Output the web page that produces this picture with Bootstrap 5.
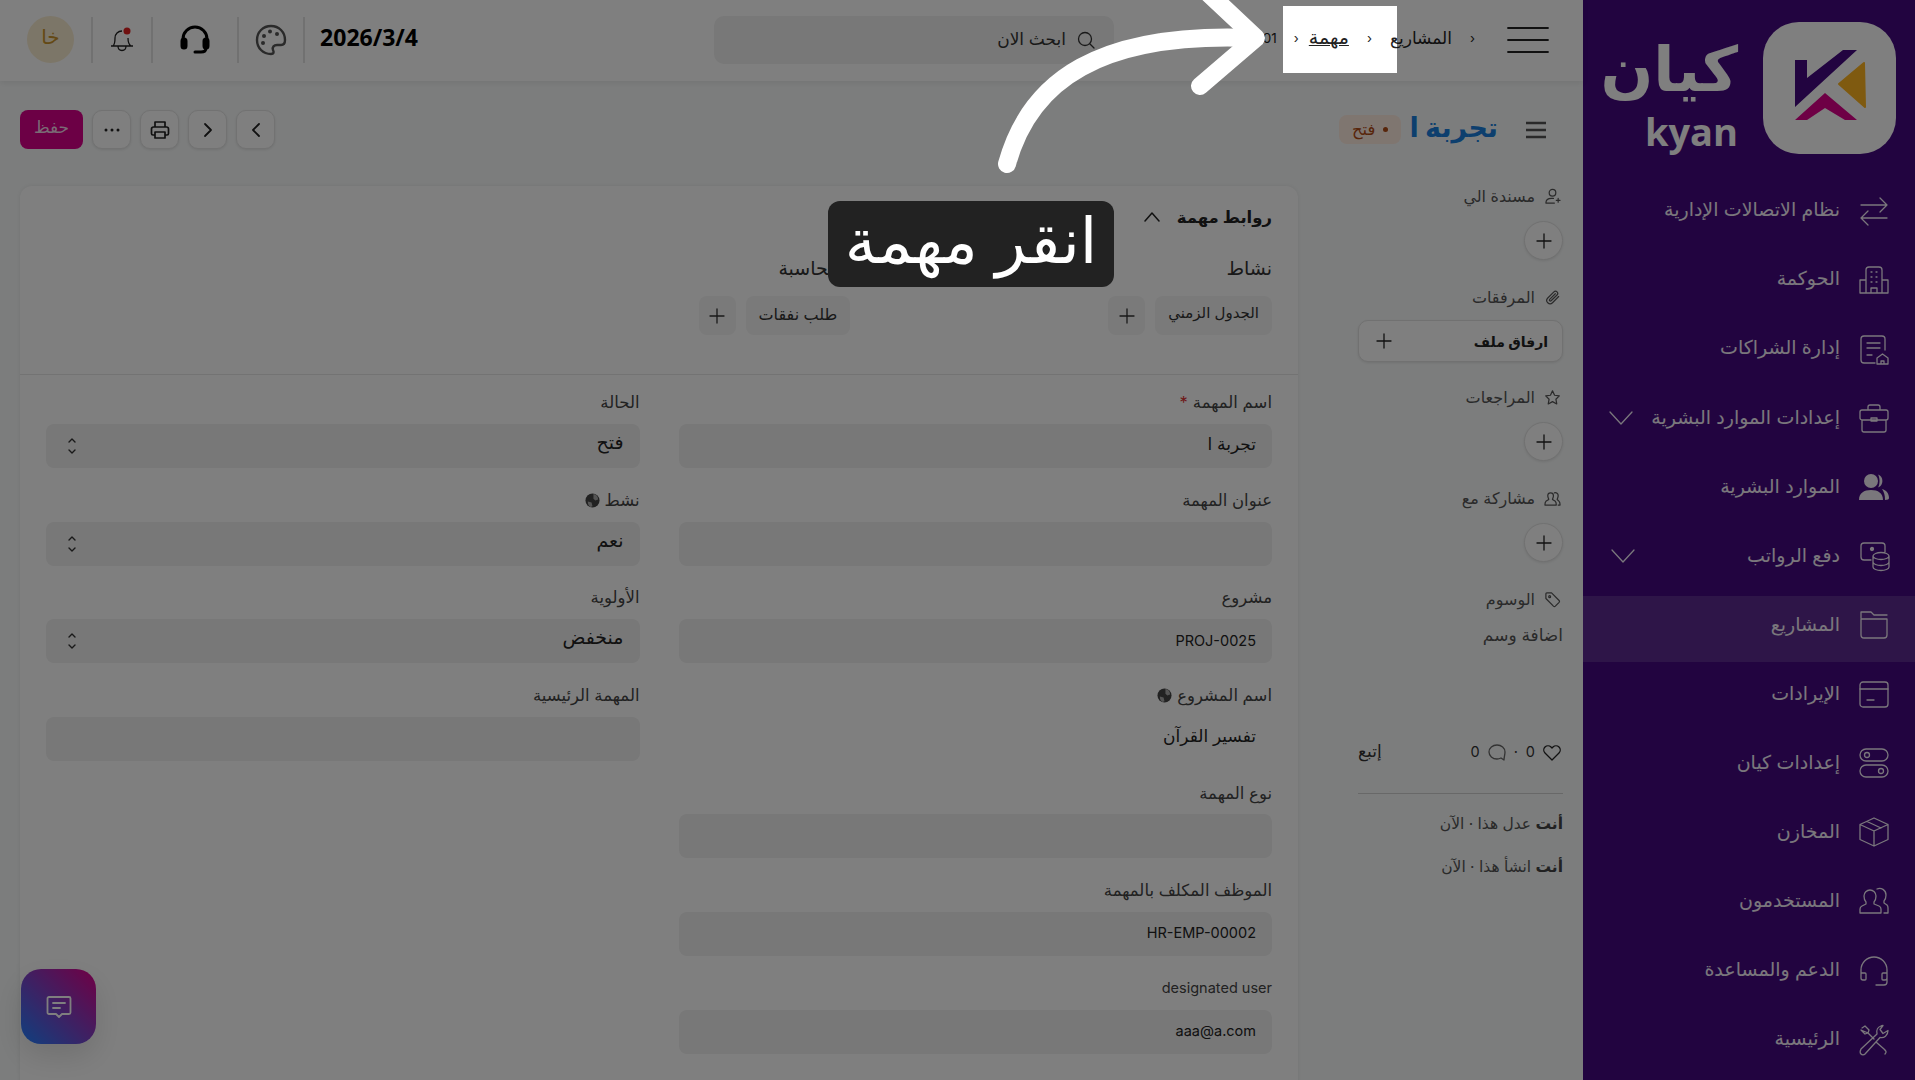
<!DOCTYPE html>
<html lang="ar" dir="rtl">
<head>
<meta charset="utf-8">
<title>مهمة</title>
<link href="https://cdn.jsdelivr.net/npm/bootstrap@5.3.0/dist/css/bootstrap.min.css" rel="stylesheet">
<style>
html,body{height:100%;overflow:hidden}
body{font-family:"Inter","DejaVu Sans",sans-serif;background:#f9fbfb;color:#222;font-size:13px}
svg{display:block;flex:none}
.ico{fill:none;stroke:currentColor;stroke-width:1.3;stroke-linecap:round;stroke-linejoin:round}
.shell{height:1080px}
.side{width:332px;flex:none;background:#440880;color:#fff;height:1080px}
.brand{height:176px;padding:22px 19px 0 0;gap:25px}
.tile{width:133px;height:132px;background:#fff;border-radius:36px}
.brand-ar{font-size:62px;font-weight:700;line-height:78px;height:78px;margin-top:8px;color:#fff;text-align:right}
.brand-en{font-family:"Open Sans",sans-serif;font-weight:700;font-size:38px;line-height:34px;direction:ltr;text-align:right;margin-top:6px}
.sitem{height:69.1px;padding:0 25px 0 28px;gap:18px;font-size:19px;color:#f4eef8;white-space:nowrap}
.sitem.on{background:#5c2a90;box-shadow:inset 0 5px 0 #440880,0 2px 0 #5c2a90}
.sitem .ico{width:32px;height:32px}
.sitem .chev{margin-right:auto;width:24px;height:14px}
.main{width:1583px;flex:none}
.top{height:81px;background:#fff;box-shadow:0 2px 6px rgba(0,0,0,.08);padding:0 34px 2px 27px;position:relative}
.burger{width:42px;height:26px}
.crumbs{width:393px;gap:18px;padding-right:32px;padding-bottom:2px;white-space:nowrap;font-size:17px;color:#222}
.crumbs a{color:#222;font-size:19px}
.crumbs .sep{font-size:13px}
.crumbs .seplast{margin-right:-8px}
.crumbs .ltr-val{font-size:13.5px;margin-right:-1px}
.searchbox{width:400px;height:48px;background:#f0f0f0;border-radius:10px;padding:0 19px;gap:11px;color:#333;font-size:17px}
.dategrp{height:46px;margin-right:auto}
.date{font-family:"Open Sans",sans-serif;font-weight:700;font-size:23px;color:#000;direction:ltr;width:115px;padding-right:2px;text-align:right;line-height:38px;padding-bottom:6px}
.cell{height:46px;border-right:2px solid #e2e2e2}
.cell1{width:66px}.cell2{width:86px}.cell3{width:60px}
.avatar{width:47px;height:47px;border-radius:50%;background:#f9ecd0;color:#c8922a;margin-right:17px;font-size:20px;padding-bottom:5px}
.bar{padding:29px 37px 0 20px;height:68px;margin-bottom:37px}
.ttlgrp{gap:12px}
.ttl{font-size:27px;font-weight:700;color:#1a7fdc;line-height:38px;margin-right:16px;padding-bottom:4px}
.pill{background:#ffece0;color:#b04a14;border-radius:8px;height:29px;padding:0 13px;font-size:16.5px;gap:8px;margin-right:-4px}
.dot{width:5px;height:5px;border-radius:50%;background:#b04a14}
.tbtn{width:39px;height:39px;background:#fff;border:1px solid #e4e4e4;border-radius:10px;box-shadow:0 1px 3px rgba(0,0,0,.1);color:#222;padding:0}
.savebtn{width:63px;height:39px;background:#d8008a;color:#f4d8ea;border:0;border-radius:8px;font-size:17px;padding:0 0 4px}
.btns{gap:9px;margin-right:auto}
.body-wrap{padding:0 20px;gap:60px}
.fside{width:205px;flex:none;color:#444}
.flabel{height:20px;gap:9px;font-size:16px;color:#555;padding-right:2px}
.flabel .ico{width:17px;height:17px}
.roundbtn{width:39px;height:39px;border-radius:50%;background:#fff;border:1px solid #e2e2e2;box-shadow:0 1px 3px rgba(0,0,0,.1);padding:0;color:#222}
.roundwrap{margin:15px 0 27px}
.attach{height:42px;width:100%;background:#fff;border:1px solid #e2e2e2;border-radius:10px;box-shadow:0 1px 3px rgba(0,0,0,.1);padding:0 14px 0 16px;margin:13px 0 25px;font-size:14px;color:#222;font-weight:700}
.tagadd{margin-top:16px;height:20px;font-size:17px;color:#555;line-height:20px}
.likes{margin-top:97px;height:20px;font-size:14.5px;color:#333;padding-right:2px}
.likes .fol{font-size:17px}
.sideline{margin:31px 0 0;border-top:1px solid #d0d0d0;opacity:1}
.act{font-size:15.5px;color:#555;height:20px;line-height:20px}
.act b{color:#444}
.act1{margin-top:20px}.act2{margin-top:23px}
.fcard{width:1278px;flex:none;background:#fff;border:0;border-radius:12px 12px 0 0;box-shadow:0 0 5px rgba(0,0,0,.08);height:900px;padding:0}
.fhead{padding:20px 26px 39px;border-bottom:1px solid #e6e6e6}
.fbody{padding:19px 26px 0}
.sect{height:22px;gap:16px;font-size:16.5px;font-weight:700;color:#222}
.tabs{--bs-gutter-x:39px;margin-top:31px}
.tabname{font-size:19px;color:#333;height:20px;line-height:20px}
.chiprow{gap:10px;margin-top:17px}
.chip{height:39px;background:#f4f4f4;border:0;border-radius:8px;padding:0 13px 4px;font-size:15px;color:#333;margin:0}
.chip.wide{font-size:16px}
.chipadd{width:37px;height:39px;background:#f4f4f4;border:0;border-radius:8px;padding:0;color:#333;margin:0}
.frow{--bs-gutter-x:39px}
.fld{margin-bottom:23.6px}
.fld label{display:flex;gap:5px;height:20px;align-items:center;font-size:16.5px;color:#444;margin-bottom:10px;padding-bottom:3px}
.fld label.ltr-val{font-size:14.5px}
.fld .form-control,.fld .form-select{height:44px;background:#f0f0f0;background-image:none;border:0;border-radius:8px;font-size:17px;color:#222;padding:0 16px 5px;box-shadow:none}
.fld .form-select{font-size:19px}
.fld .form-control.ltr-val{font-size:14.5px;padding-bottom:2px}
.fld .req{color:#d33}
.fld .form-control.plain{background:#fff}
.ltr-val{font-family:"Inter",sans-serif}
.updown{position:absolute;left:21px;top:50%;transform:translateY(-50%);color:#333}
.fab{position:absolute;left:21px;top:969px;width:75px;height:75px;border-radius:20px;background:linear-gradient(45deg,#1f80ff,#e0008a);box-shadow:0 12px 30px rgba(0,0,0,.12);color:#fff}
.hole{position:fixed;left:1283px;top:6px;width:114px;height:67px;box-shadow:0 0 0 3000px rgba(0,0,0,.5);z-index:1050;pointer-events:none}
.arrow{position:fixed;left:0;top:0;z-index:1060;pointer-events:none}
.tip{position:fixed;left:828px;top:201px;width:286px;height:86px;background:#222;color:#fff;border-radius:12px;font-size:63px;line-height:78px;text-align:center;z-index:1060;white-space:nowrap;overflow:hidden}
</style>
</head>
<body>
<div class="shell d-flex">
  <aside class="side">
    <div class="brand d-flex align-items-start">
      <div class="tile d-flex align-items-center justify-content-center">
        <svg width="133" height="132" viewBox="0 0 133 128">
          <polygon points="32,36 44,36 44,54 80,26 94,26 32,83" fill="#440880"/>
          <polygon points="101,39 102,83 76,60" fill="#ffb420" stroke="#ffb420" stroke-width="2" stroke-linejoin="round"/>
          <polygon points="32,96 62,69 94,96 82,96 62,84 44,96" fill="#dc008a"/>
        </svg>
      </div>
      <div>
        <div class="brand-ar">كيان</div>
        <div class="brand-en">kyan</div>
      </div>
    </div>
    <nav class="d-flex flex-column">
      <div class="sitem d-flex align-items-center"><svg class="ico" viewBox="0 0 32 32"><path d="M3 10h26M22 3l7 7-7 7M29 23H3M10 16l-7 7 7 7"/></svg><span>نظام الاتصالات الإدارية</span></div>
      <div class="sitem d-flex align-items-center"><svg class="ico" viewBox="0 0 32 32"><path d="M8 29V6a3 3 0 0 1 3-3h10a3 3 0 0 1 3 3v23M8 16H2v13h28V16h-6M13 29v-5h6v5M13 8h1M18 8h1M13 13h1M18 13h1M13 18h1M18 18h1"/></svg><span>الحوكمة</span></div>
      <div class="sitem d-flex align-items-center"><svg class="ico" viewBox="0 0 32 32"><path d="M27 17V6a3 3 0 0 0-3-3H6a3 3 0 0 0-3 3v21a3 3 0 0 0 3 3h11M9 10h13M9 15h13M9 22h5M19 31v-6l5.500-4 5.500 4v6zM23 31v-3h3v3"/></svg><span>إدارة الشراكات</span></div>
      <div class="sitem d-flex align-items-center"><svg class="ico" viewBox="0 0 32 32"><path d="M2 10a2 2 0 0 1 2-2h24a2 2 0 0 1 2 2v6a2 2 0 0 1-2 2H4a2 2 0 0 1-2-2zM4 18v10a2 2 0 0 0 2 2h20a2 2 0 0 0 2-2V18M10 8V5a2 2 0 0 1 2-2h8a2 2 0 0 1 2 2v3M13 16h6v3h-6z"/></svg><span>إعدادات الموارد البشرية</span><svg class="ico chev" viewBox="0 0 24 14"><path d="M1 1l11 12L23 1"/></svg></div>
      <div class="sitem d-flex align-items-center"><svg class="ico" viewBox="0 0 32 32" style="fill:currentColor;stroke:none"><circle cx="13" cy="10" r="7"/><path d="M1 29c0-7 5-10 12-10s12 3 12 10zM20 3.500a7 7 0 0 1 0 13c2-3 2-10 0-13zM24 18c4 1 7 4 7 9 0 1-1 2-4 2 0-5-1-8-3-11z"/></svg><span>الموارد البشرية</span></div>
      <div class="sitem d-flex align-items-center"><svg class="ico" viewBox="0 0 32 32"><path d="M27 12V6a3 3 0 0 0-3-3H6a3 3 0 0 0-3 3v11a3 3 0 0 0 3 3h7M15 16c0-2 4-3.500 8-3.500s8 1.500 8 3.500-4 3.500-8 3.500-8-1.500-8-3.500zM15 16v11c0 2 4 3.500 8 3.500s8-1.500 8-3.500V16M15 22c0 2 4 3.500 8 3.500s8-1.500 8-3.500"/><circle cx="14" cy="9" r="1.500" fill="currentColor"/></svg><span>دفع الرواتب</span><svg class="ico chev" viewBox="0 0 24 14"><path d="M1 1l11 12L23 1"/></svg></div>
      <div class="sitem on d-flex align-items-center"><svg class="ico" viewBox="0 0 32 32"><path d="M3 9V3h10l3 3h13M3 10h26v16a3 3 0 0 1-3 3H6a3 3 0 0 1-3-3z"/></svg><span>المشاريع</span></div>
      <div class="sitem d-flex align-items-center"><svg class="ico" viewBox="0 0 32 32"><rect x="2" y="4" width="28" height="25" rx="3"/><path d="M2 11h28M9 22h7"/></svg><span>الإيرادات</span></div>
      <div class="sitem d-flex align-items-center"><svg class="ico" viewBox="0 0 32 32"><rect x="2" y="2" width="28" height="12" rx="6"/><circle cx="9" cy="8" r="2.500"/><rect x="2" y="18" width="28" height="12" rx="6"/><circle cx="23" cy="24" r="2.500"/></svg><span>إعدادات كيان</span></div>
      <div class="sitem d-flex align-items-center"><svg class="ico" viewBox="0 0 32 32"><path d="M16 2l14 6.500v15L16 30 2 23.500v-15zM2 8.500L16 15l14-6.500M16 15v15M9 5.500l14 6.500"/></svg><span>المخازن</span></div>
      <div class="sitem d-flex align-items-center"><svg class="ico" viewBox="0 0 32 32"><path d="M12 5a6 6 0 0 1 6 6c0 3-1 5-2 6v2l5 2c2 1 2 2 2 3v4H2v-4c0-1 0-2 2-3l4-2v-2c-1-1-2-3-2-6a6 6 0 0 1 6-6zM19 4c4-2 9 1 9 6 0 3-1 5-2 6v2l3 2c1 1 1 2 1 3v5h-4"/></svg><span>المستخدمون</span></div>
      <div class="sitem d-flex align-items-center"><svg class="ico" viewBox="0 0 32 32"><path d="M3 23V15a13 13 0 0 1 26 0v8M3 18h4a1 1 0 0 1 1 1v5a1 1 0 0 1-1 1H5a2 2 0 0 1-2-2M29 18h-4a1 1 0 0 0-1 1v5a1 1 0 0 0 1 1h2a2 2 0 0 0 2-2M29 23v4a3 3 0 0 1-3 3h-8"/></svg><span>الدعم والمساعدة</span></div>
      <div class="sitem d-flex align-items-center"><svg class="ico" viewBox="0 0 32 32"><path d="M3 25L19 10c-1-4 1-7 4-8l2-.5-3 4 3 4 5-3c0 5-4 8-8 7L7 30c-1 1-3 1-4 0s-1-3 0-5zM4 4l3-2 4 4-1 3 6 6M18 18l8 7c2 2 3 3 1 5M10 9L7 10 3 6z"/></svg><span>الرئيسية</span></div>
    </nav>
  </aside>

  <div class="main">
    <header class="top d-flex align-items-center">
      <svg class="burger ico" viewBox="0 0 42 26"><path d="M1 1h40M1 13h40M1 25h40" stroke-width="1.800"/></svg>
      <div class="crumbs d-flex align-items-center">
        <span class="sep">‹</span>
        <span>المشاريع</span>
        <span class="sep">‹</span>
        <a href="#">مهمة</a>
        <span class="sep seplast">‹</span>
        <span class="ltr-val" dir="ltr">TASK-2026-00001</span>
      </div>
      <div class="searchbox d-flex align-items-center">
        <svg class="ico" width="18" height="18" viewBox="0 0 18 18"><circle cx="8" cy="8" r="6.500"/><path d="M13 13l4 4"/></svg>
        <span>ابحث الان</span>
      </div>
      <div class="dategrp d-flex align-items-center">
        <div class="date">2026/3/4</div>
        <div class="cell cell1 d-flex align-items-center justify-content-center">
          <svg width="32" height="32" viewBox="0 0 32 32" fill="none" stroke="#555" stroke-width="2.400"><path d="M16 2C8 2 2 8 2 16s6 14 14 14c3 0 3-2 2-4-1-3 1-5 4-5h4c3 0 4-2 4-5C30 8 24 2 16 2z"/><g fill="#555" stroke="none"><circle cx="9" cy="12" r="2"/><circle cx="15" cy="7.500" r="2"/><circle cx="22" cy="10" r="2"/><circle cx="8" cy="19" r="2"/></g></svg>
        </div>
        <div class="cell cell2 d-flex align-items-center justify-content-center">
          <svg width="30" height="30" viewBox="0 0 30 30" fill="none" stroke="#000" stroke-width="3"><path d="M3 19V14a12 12 0 0 1 24 0v5"/><rect x="2" y="14" width="4" height="9" rx="2" fill="#000"/><rect x="24" y="14" width="4" height="9" rx="2" fill="#000"/><path d="M26 23c0 3-2 4-5 4h-6" stroke-linecap="round"/></svg>
        </div>
        <div class="cell cell3 d-flex align-items-center justify-content-center">
          <svg width="24" height="28" viewBox="0 0 24 28" fill="none" stroke="#222" stroke-width="1.300"><path d="M3 20c2-2 2-5 2-8 0-4 3-7 7-7M18 12c0 3 0 6 3 8M1 20h22M8 20c0 6 8 6 8 0"/><circle cx="17" cy="5" r="3.500" fill="#e02020" stroke="none"/></svg>
        </div>
        <div class="cell"></div>
        <div class="avatar d-flex align-items-center justify-content-center">خا</div>
      </div>
    </header>

    <div class="bar d-flex align-items-center">
      <div class="ttlgrp d-flex align-items-center">
        <svg width="20" height="18" viewBox="0 0 20 18" fill="none" stroke="#555" stroke-width="2.400"><path d="M0 2h20M0 9h20M0 16h20"/></svg>
        <span class="ttl">تجربة ا</span>
        <span class="pill d-flex align-items-center"><span class="dot"></span><span>فتح</span></span>
      </div>
      <div class="btns d-flex align-items-center">
        <button class="tbtn d-flex align-items-center justify-content-center"><svg class="ico" width="18" height="18" viewBox="0 0 18 18" style="stroke-width:1.800"><path d="M12 3L6 9l6 6"/></svg></button>
        <button class="tbtn d-flex align-items-center justify-content-center"><svg class="ico" width="18" height="18" viewBox="0 0 18 18" style="stroke-width:1.800"><path d="M6 3l6 6-6 6"/></svg></button>
        <button class="tbtn d-flex align-items-center justify-content-center"><svg class="ico" width="20" height="20" viewBox="0 0 20 20" style="stroke-width:1.700"><path d="M5 7V2h10v5M5 15H3a1.500 1.500 0 0 1-1.500-1.500V9A2 2 0 0 1 3.500 7h13a2 2 0 0 1 2 2v4.500A1.500 1.500 0 0 1 17 15h-2M5 12h10v6H5z"/></svg></button>
        <button class="tbtn d-flex align-items-center justify-content-center"><svg width="16" height="4" viewBox="0 0 16 4" fill="#222"><circle cx="2" cy="2" r="1.500"/><circle cx="8" cy="2" r="1.500"/><circle cx="14" cy="2" r="1.500"/></svg></button>
        <button class="savebtn">حفظ</button>
      </div>
    </div>

    <div class="body-wrap d-flex">
      <div class="fside">
        <div class="flabel d-flex align-items-center"><svg class="ico" viewBox="0 0 18 18"><circle cx="9" cy="5" r="3.500"/><path d="M2 16c0-3 2-5 6-5h2M13 13h4M15 11v4M2 16h9"/></svg><span>مسندة الي</span></div>
        <div class="roundwrap"><button class="roundbtn d-flex align-items-center justify-content-center"><svg class="ico" width="18" height="18" viewBox="0 0 18 18"><path d="M9 2v14M2 9h14"/></svg></button></div>
        <div class="flabel d-flex align-items-center"><svg class="ico" viewBox="0 0 18 18"><path d="M15.500 8l-6.500 6.500a3.500 3.500 0 0 1-5-5L10.500 3a2.300 2.300 0 0 1 3.300 3.300L7.500 12.500a1 1 0 0 1-1.500-1.500L12 5"/></svg><span>المرفقات</span></div>
        <button class="attach d-flex align-items-center justify-content-between"><span>ارفاق ملف</span><svg class="ico" width="18" height="18" viewBox="0 0 18 18"><path d="M9 2v14M2 9h14"/></svg></button>
        <div class="flabel d-flex align-items-center"><svg class="ico" viewBox="0 0 18 18"><path d="M9 2l2.200 4.600 5 .7-3.600 3.500.9 5L9 13.400l-4.500 2.400.9-5L1.800 7.300l5-.7z"/></svg><span>المراجعات</span></div>
        <div class="roundwrap"><button class="roundbtn d-flex align-items-center justify-content-center"><svg class="ico" width="18" height="18" viewBox="0 0 18 18"><path d="M9 2v14M2 9h14"/></svg></button></div>
        <div class="flabel d-flex align-items-center"><svg class="ico" viewBox="0 0 18 18"><path d="M7 3a3 3 0 0 1 3 3c0 2-1 3-1 4l3 2c1 1 1 2 1 4H1c0-2 0-3 1-4l3-2c0-1-1-2-1-4a3 3 0 0 1 3-3zM11 3a3 3 0 0 1 4 3c0 2-1 3-1 4l2 2c1 1 1 2 1 4h-2"/></svg><span>مشاركة مع</span></div>
        <div class="roundwrap"><button class="roundbtn d-flex align-items-center justify-content-center"><svg class="ico" width="18" height="18" viewBox="0 0 18 18"><path d="M9 2v14M2 9h14"/></svg></button></div>
        <div class="flabel d-flex align-items-center"><svg class="ico" viewBox="0 0 18 18"><path d="M2 3a1 1 0 0 1 1-1h5l8 8a1.500 1.500 0 0 1 0 2l-4 4a1.500 1.500 0 0 1-2 0L2 8z"/><circle cx="6" cy="6" r="1"/></svg><span>الوسوم</span></div>
        <div class="tagadd">اضافة وسم</div>
        <div class="likes d-flex align-items-center justify-content-between">
          <div class="d-flex align-items-center gap-2">
            <svg class="ico" width="18" height="17" viewBox="0 0 18 17" style="color:#222"><path d="M9 16L2 9a4.300 4.300 0 0 1 0-6 4.300 4.300 0 0 1 6 0l1 1 1-1a4.300 4.300 0 0 1 6 0 4.300 4.300 0 0 1 0 6z"/></svg>
            <span>0</span><span>·</span>
            <svg class="ico" width="18" height="17" viewBox="0 0 18 17" style="color:#666"><path d="M9 1a8 7 0 0 1 8 7c0 3-1 5-1 8l-3-2c-1 .5-3 1-4 1A8 7 0 0 1 9 1z"/></svg>
            <span>0</span>
          </div>
          <span class="fol">إتبع</span>
        </div>
        <hr class="sideline">
        <div class="act act1"><b>أنت</b> عدل هذا · الآن</div>
        <div class="act act2"><b>أنت</b> انشأ هذا · الآن</div>
      </div>

      <main class="card fcard">
        <div class="fhead">
          <div class="sect d-flex align-items-center"><span>روابط مهمة</span><svg class="ico" width="18" height="10" viewBox="0 0 18 10" style="stroke-width:1.500"><path d="M2 9l7-8 7 8"/></svg></div>
          <div class="row tabs">
            <div class="col-4">
              <div class="tabname">نشاط</div>
              <div class="chiprow d-flex">
                <span class="chip d-flex align-items-center">الجدول الزمني</span>
                <button class="chipadd d-flex align-items-center justify-content-center"><svg class="ico" width="18" height="18" viewBox="0 0 18 18"><path d="M9 2v14M2 9h14"/></svg></button>
              </div>
            </div>
            <div class="col-4">
              <div class="tabname">المحاسبة</div>
              <div class="chiprow d-flex">
                <span class="chip wide d-flex align-items-center">طلب نفقات</span>
                <button class="chipadd d-flex align-items-center justify-content-center"><svg class="ico" width="18" height="18" viewBox="0 0 18 18"><path d="M9 2v14M2 9h14"/></svg></button>
              </div>
            </div>
          </div>
        </div>
        <div class="fbody">
        <div class="row frow">
          <div class="col-6">
            <div class="fld"><label>اسم المهمة <span class="req">*</span></label><input class="form-control" value="تجربة ا" readonly></div>
            <div class="fld"><label>عنوان المهمة</label><input class="form-control" readonly></div>
            <div class="fld"><label>مشروع</label><input class="form-control ltr-val" value="PROJ-0025" readonly></div>
            <div class="fld"><label>اسم المشروع <svg width="15" height="15" viewBox="0 0 16 16"><circle cx="8" cy="8" r="7.500" fill="#444"/><path d="M9 1c3 0 5 3 5 6l-3 1-2-2zM3 9l4 1 1 4-2 1c-2-1-3-3-3-6z" fill="#aaa"/></svg></label><input class="form-control plain" value="تفسير القرآن" readonly></div>
            <div class="fld"><label>نوع المهمة</label><input class="form-control" readonly></div>
            <div class="fld"><label>الموظف المكلف بالمهمة</label><input class="form-control ltr-val" value="HR-EMP-00002" readonly></div>
            <div class="fld"><label class="ltr-val">designated user</label><input class="form-control ltr-val" value="aaa@a.com" readonly></div>
          </div>
          <div class="col-6">
            <div class="fld"><label>الحالة</label><div class="position-relative"><select class="form-select"><option>فتح</option></select><svg class="updown ico" width="10" height="20" viewBox="0 0 10 20" style="stroke-width:1.400"><path d="M2 6l3-3 3 3M2 14l3 3 3-3"/></svg></div></div>
            <div class="fld"><label>نشط <svg width="15" height="15" viewBox="0 0 16 16"><circle cx="8" cy="8" r="7.500" fill="#444"/><path d="M9 1c3 0 5 3 5 6l-3 1-2-2zM3 9l4 1 1 4-2 1c-2-1-3-3-3-6z" fill="#aaa"/></svg></label><div class="position-relative"><select class="form-select"><option>نعم</option></select><svg class="updown ico" width="10" height="20" viewBox="0 0 10 20" style="stroke-width:1.400"><path d="M2 6l3-3 3 3M2 14l3 3 3-3"/></svg></div></div>
            <div class="fld"><label>الأولوية</label><div class="position-relative"><select class="form-select"><option>منخفض</option></select><svg class="updown ico" width="10" height="20" viewBox="0 0 10 20" style="stroke-width:1.400"><path d="M2 6l3-3 3 3M2 14l3 3 3-3"/></svg></div></div>
            <div class="fld"><label>المهمة الرئيسية</label><input class="form-control" readonly></div>
          </div>
        </div>
        </div>
      </main>
    </div>
  </div>
</div>

<div class="fab d-flex align-items-center justify-content-center">
  <svg class="ico" width="26" height="24" viewBox="0 0 26 24" style="stroke-width:1.800"><path d="M3 2h20a1.500 1.500 0 0 1 1.500 1.500v14A1.500 1.500 0 0 1 23 19h-7l-3 3-3-3H3a1.500 1.500 0 0 1-1.500-1.500v-14A1.500 1.500 0 0 1 3 2zM7 8h12M7 13h7"/></svg>
</div>

<div class="hole"></div>
<svg class="arrow" width="1915" height="1080" viewBox="0 0 1915 1080" fill="none" stroke="#fff" stroke-width="18" stroke-linecap="round" stroke-linejoin="round"><path d="M1007 164C1030 80 1100 32 1252 38"/><path d="M1207-8L1256 38 1200 86"/></svg>
<div class="tip">انقر مهمة</div>
</body>
</html>
